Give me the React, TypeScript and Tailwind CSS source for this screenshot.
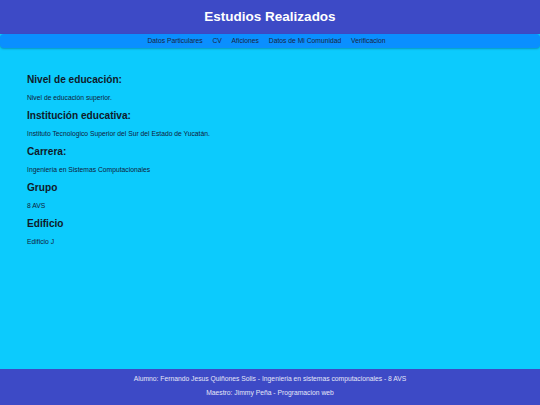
import React from 'react';

// Secciones de estudios
const sections = [
  { title: 'Nivel de educación:', text: 'Nivel de educación superior.' },
  { title: 'Institución educativa:', text: 'Instituto Tecnologico Superior del Sur del Estado de Yucatán.' },
  { title: 'Carrera:', text: 'Ingeniería en Sistemas Computacionales' },
  { title: 'Grupo', text: '8 AVS' },
  { title: 'Edificio', text: 'Edificio J' },
];

const links = ['Datos Particulares', 'CV', 'Aficiones', 'Datos de Mi Comunidad', 'Verificacion'];

export default function App() {
  return (
    <div className="flex h-[405px] w-[540px] flex-col overflow-hidden bg-[#0ccbfd] font-['Liberation_Sans',Arial,sans-serif]">
      {/* Header */}
      <header className="flex h-[34px] shrink-0 items-center justify-center bg-[#3d4ac6]">
        <h1 className="text-[13.5px] font-bold leading-none text-white">Estudios Realizados</h1>
      </header>

      {/* Navegacion */}
      <nav className="flex h-[14px] shrink-0 items-center justify-center gap-[9.8px] rounded-[4px] bg-[#0a8fff] pr-[7px] shadow-[0_1px_2px_rgba(0,0,0,0.25)]">
        {links.map((link) => (
          <a key={link} className="text-[6.75px] leading-none text-[#1b2440]">
            {link}
          </a>
        ))}
      </nav>

      {/* Contenido */}
      <main className="flex-1 px-[27px] pt-[23px]">
        {sections.map((s) => (
          <section key={s.title} className="flex flex-col">
            <h2 className="flex h-[18px] items-center text-[10.125px] font-bold leading-none text-[#0f1a2a]">{s.title}</h2>
            <p className="flex h-[18px] items-center text-[6.75px] leading-none text-[#10203a]">{s.text}</p>
          </section>
        ))}
      </main>

      {/* Footer */}
      <footer className="flex h-[36px] shrink-0 flex-col items-center justify-center gap-[7.5px] bg-[#3d4ac6] pb-[1px] text-[6.75px] leading-none text-[#e4e6f7]">
        <p>Alumno: Fernando Jesus Quiñones Solis - Ingenieria en sistemas computacionales - 8 AVS</p>
        <p>Maestro: Jimmy Peña - Programacion web</p>
      </footer>
    </div>
  );
}
